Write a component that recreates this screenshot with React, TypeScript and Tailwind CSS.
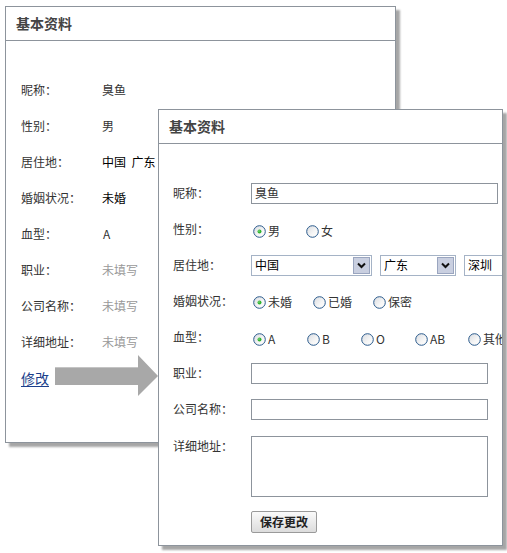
import React from "react";

const font = { fontFamily: '"Noto Sans CJK SC", "Noto Sans", sans-serif' };

function Radio({ checked }: { checked?: boolean }) {
  return (
    <svg width="13" height="13" viewBox="0 0 13 13" className="shrink-0">
      <defs>
        <linearGradient id="rg" x1="0" y1="0" x2="1" y2="1">
          <stop offset="0" stopColor="#d8dbe0" />
          <stop offset="0.6" stopColor="#f6f6f6" />
          <stop offset="1" stopColor="#ffffff" />
        </linearGradient>
      </defs>
      <circle cx="6.5" cy="6.5" r="5.8" fill="url(#rg)" stroke="#2a5a8c" strokeWidth="1" />
      {checked && <circle cx="6.5" cy="6.5" r="2" fill="#2fb52f" />}
      {checked && <circle cx="6" cy="6" r="0.8" fill="#8fe08f" />}
    </svg>
  );
}

function RadioItem({ label, checked, w }: { label: string; checked?: boolean; w: string }) {
  return (
    <div className={`flex items-center gap-[2px] ${w} shrink-0 pt-[4px]`}>
      <Radio checked={checked} />
      <span className="text-[12px] text-[#333]">{label}</span>
    </div>
  );
}

function Select({ text, w, button = true }: { text: string; w: string; button?: boolean }) {
  return (
    <div className={`${w} h-[21px] shrink-0 border border-[#a5b3c6] bg-white flex items-center`}>
      <span className="flex-1 pl-[3px] text-[12px] text-black leading-none">{text}</span>
      {button && (
        <div className="w-[17px] h-[17px] mr-[1px] border border-[#9aa5bf] bg-[#c9cfe0] flex items-center justify-center">
          <svg width="9" height="7" viewBox="0 0 9 7">
            <path d="M1 1.5 L4.5 5 L8 1.5" fill="none" stroke="#111" strokeWidth="2" />
          </svg>
        </div>
      )}
    </div>
  );
}

function ViewRow({ label, children }: { label: string; children: React.ReactNode }) {
  return (
    <div className="h-[36px] flex items-center">
      <div className="w-[81px] shrink-0 text-[12px] text-[#333]">{label}</div>
      <div className="text-[12px]">{children}</div>
    </div>
  );
}

function EditRow({ label, children }: { label: string; children: React.ReactNode }) {
  return (
    <div className="h-[36px] flex items-center">
      <div className="w-[78px] shrink-0 text-[12px] text-[#333]">{label}</div>
      <div className="flex items-center min-w-0">{children}</div>
    </div>
  );
}

export default function App() {
  return (
    <div className="relative w-[507px] h-[553px] bg-white overflow-hidden" style={font}>
      {/* Panel 1: view mode */}
      <div className="absolute left-[5px] top-[6px] w-[391px] h-[437px] border border-[#8d949c] bg-white shadow-[4px_4px_2px_rgba(0,0,0,0.35)]">
        <div className="h-[34px] border-b border-[#8d949c] flex items-center pl-[10px]">
          <span className="text-[14px] font-bold text-[#444]">基本资料</span>
        </div>
        <div className="pl-[15px] pt-[31px]">
          <ViewRow label="昵称："><span className="text-[#333]">臭鱼</span></ViewRow>
          <ViewRow label="性别："><span className="text-[#333]">男</span></ViewRow>
          <ViewRow label="居住地："><span className="text-black">中国&nbsp;&nbsp;广东&nbsp;&nbsp;深圳</span></ViewRow>
          <ViewRow label="婚姻状况："><span className="text-black">未婚</span></ViewRow>
          <ViewRow label="血型："><span className="text-[#333] pl-[1px]">A</span></ViewRow>
          <ViewRow label="职业："><span className="text-[#999]">未填写</span></ViewRow>
          <ViewRow label="公司名称："><span className="text-[#999]">未填写</span></ViewRow>
          <ViewRow label="详细地址："><span className="text-[#999]">未填写</span></ViewRow>
          <div className="h-[36px] flex items-center">
            <a className="text-[14px] text-[#1b3f8b] underline underline-offset-2">修改</a>
          </div>
        </div>
      </div>

      {/* Arrow */}
      <svg className="absolute left-0 top-0" width="507" height="553" viewBox="0 0 507 553">
        <polygon
          points="55,367 138,367 138,355 158,376 138,396 138,385 55,385"
          fill="#a8a8a8"
        />
        <line x1="55" y1="367.5" x2="138" y2="367.5" stroke="#c4c4c4" strokeWidth="1" />
      </svg>

      {/* Panel 2: edit mode */}
      <div className="absolute left-[158px] top-[109px] w-[345px] h-[437px] border border-[#8d949c] bg-white shadow-[4px_4px_2px_rgba(0,0,0,0.35)]">
        <div className="h-full w-full overflow-hidden">
          <div className="h-[34px] border-b border-[#8d949c] flex items-center pl-[10px]">
            <span className="text-[14px] font-bold text-[#444]">基本资料</span>
          </div>
          <div className="pl-[14px] pt-[31px]">
            <EditRow label="昵称：">
              <div className="w-[247px] h-[21px] border border-[#8d949c] flex items-center pl-[3px] text-[12px] text-[#333]">臭鱼</div>
            </EditRow>
            <EditRow label="性别：">
              <div className="flex pl-[2px]">
                <RadioItem label="男" checked w="w-[53px]" />
                <RadioItem label="女" w="w-[53px]" />
              </div>
            </EditRow>
            <EditRow label="居住地：">
              <div className="flex gap-[8px]">
                <Select text="中国" w="w-[121px]" />
                <Select text="广东" w="w-[76px]" />
                <Select text="深圳" w="w-[80px]" />
              </div>
            </EditRow>
            <EditRow label="婚姻状况：">
              <div className="flex pl-[2px] -mt-[2px]">
                <RadioItem label="未婚" checked w="w-[60px]" />
                <RadioItem label="已婚" w="w-[60px]" />
                <RadioItem label="保密" w="w-[60px]" />
              </div>
            </EditRow>
            <EditRow label="血型：">
              <div className="flex pl-[2px]">
                <RadioItem label="A" checked w="w-[54px]" />
                <RadioItem label="B" w="w-[54px]" />
                <RadioItem label="O" w="w-[54px]" />
                <RadioItem label="AB" w="w-[53px]" />
                <RadioItem label="其他" w="w-[54px]" />
              </div>
            </EditRow>
            <EditRow label="职业：">
              <div className="w-[237px] h-[21px] border border-[#8d949c]" />
            </EditRow>
            <EditRow label="公司名称：">
              <div className="w-[237px] h-[21px] border border-[#8d949c]" />
            </EditRow>
            <div className="flex mt-[9px]">
              <div className="w-[78px] shrink-0 text-[12px] text-[#333] pt-[1px]">详细地址：</div>
              <div className="w-[237px] h-[61px] border border-[#8d949c]" />
            </div>
            <div className="pl-[78px] mt-[14px]">
              <button className="w-[66px] h-[22px] border border-[#9a9a9a] rounded-[2px] bg-gradient-to-b from-[#fafafa] to-[#dcdcdc] text-[12px] font-bold text-[#222] flex items-center justify-center">
                保存更改
              </button>
            </div>
          </div>
        </div>
      </div>
    </div>
  );
}
